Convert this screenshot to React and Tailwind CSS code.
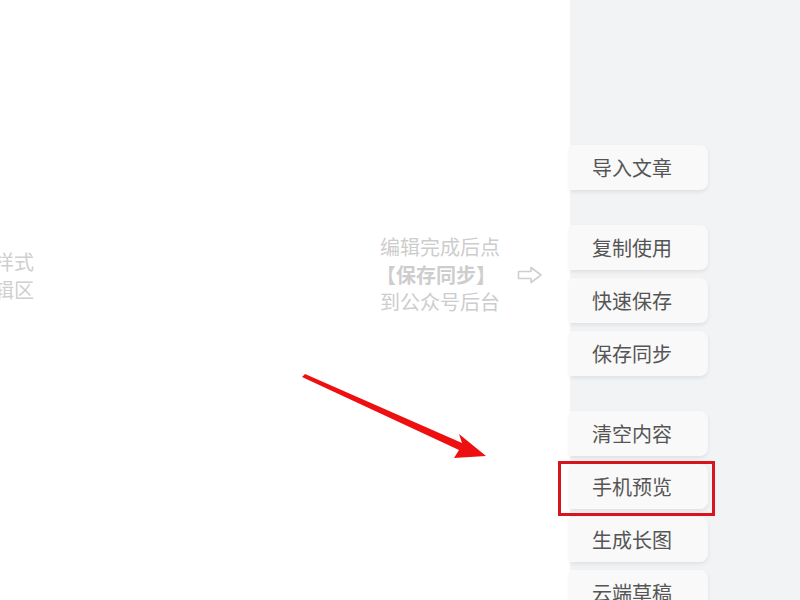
import React from "react";

const GROUPS = [
  ["导入文章"],
  ["复制使用", "快速保存", "保存同步"],
  ["清空内容", "手机预览", "生成长图", "云端草稿"],
];

function SideButton({ label }) {
  return (
    <div className="relative">
      <button className="w-[138px] h-[45px] rounded-r-lg bg-[#f9f9f9] shadow-[0_2px_4px_rgba(0,0,0,0.08)] text-left pl-[22px] text-[20px] text-[#555]">
        {label}
      </button>
      {label === "手机预览" && (
        <div className="absolute left-[-12px] top-[-3px] w-[157px] h-[55px] border-[3px] border-[#d8141e] pointer-events-none" />
      )}
    </div>
  );
}

export default function App() {
  return (
    <div
      className="relative w-[800px] h-[600px] overflow-hidden flex bg-white"
      style={{ fontFamily: '"Noto Sans CJK SC", "Noto Sans", sans-serif' }}
    >
      {/* editor area */}
      <div className="flex-1 relative">
        <div className="absolute left-[-66px] w-[100px] top-[248px] text-right text-[20px] leading-[28px] text-[#cfcfcf]">
          <div>拖动样式</div>
          <div>到编辑区</div>
        </div>
        <div className="absolute left-[380px] top-[233px] flex items-center gap-[17px]">
          <div className="text-[20px] leading-[27.5px] text-[#cdcdcd]">
            <div>编辑完成后点</div>
            <div className="font-bold ml-[-4px]">【保存同步】</div>
            <div>到公众号后台</div>
          </div>
          <svg width="26" height="18" viewBox="0 0 26 18" className="mt-[2px]">
            <path d="M1.5 5.5 H14 V1.5 L24 9 L14 16.5 V12.5 H1.5 Z" fill="none" stroke="#cfcfcf" strokeWidth="1.6" strokeLinejoin="round" />
          </svg>
        </div>
      </div>

      {/* sidebar */}
      <div className="w-[230px] bg-[#f2f3f4] pt-[145px] flex flex-col gap-[35px]">
        {GROUPS.map((g, i) => (
          <div key={i} className="flex flex-col gap-[8px]">
            {g.map(l => <SideButton key={l} label={l} />)}
          </div>
        ))}
      </div>

      {/* annotation arrow */}
      <svg className="absolute left-0 top-0 pointer-events-none" width="800" height="600">
        <path d="M305 374 L462 443 L459 434 L486 456 L454 458 L459 450 L302 377 Z" fill="#ee1010" />
      </svg>
    </div>
  );
}
